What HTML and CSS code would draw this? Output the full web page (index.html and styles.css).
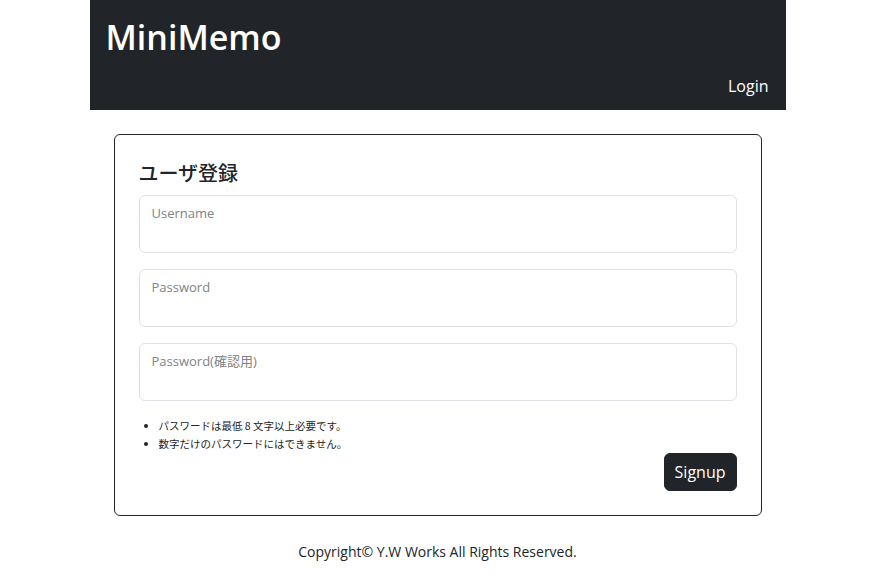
FILE: index.html
```html
<!DOCTYPE html>
<html lang="ja">
<head>
<meta charset="utf-8">
<title>MiniMemo</title>
<link rel="stylesheet" href="styles.css">
</head>
<body>
<div class="container">
  <header class="site-header">
    <h1 class="brand">MiniMemo</h1>
    <nav class="nav"><a class="nav-link" href="#">Login</a></nav>
  </header>
  <main class="card">
    <h4 class="card-title">ユーザ登録</h4>
    <form class="form">
      <div class="field">
        <input class="field-input" type="text" id="username">
        <label class="field-label" for="username">Username</label>
      </div>
      <div class="field">
        <input class="field-input" type="password" id="password">
        <label class="field-label" for="password">Password</label>
      </div>
      <div class="field">
        <input class="field-input" type="password" id="password2">
        <label class="field-label" for="password2">Password(確認用)</label>
      </div>
      <ul class="notes">
        <li>パスワードは最低 8 文字以上必要です。</li>
        <li>数字だけのパスワードにはできません。</li>
      </ul>
      <div class="actions">
        <button class="btn" type="button">Signup</button>
      </div>
    </form>
  </main>
  <footer class="footer">Copyright© Y.W Works All Rights Reserved.</footer>
</div>
</body>
</html>
```
FILE: styles.css
```css
* { box-sizing: border-box; }
html, body {
  margin: 0;
  padding: 0;
  background: #fff;
  color: #212529;
  font-family: "Open Sans", "Noto Sans CJK JP", sans-serif;
  font-size: 16px;
  line-height: 1.5;
}
.container {
  width: 696px;
  margin: 0 auto;
}
.site-header {
  background: #212529;
  color: #fff;
  padding: 16px 17px 12px 16px;
  display: flex;
  flex-direction: column;
}
.brand {
  margin: 0 0 16px;
  font-size: 34px;
  line-height: 42px;
  font-weight: 600;
}
.nav {
  display: flex;
  justify-content: flex-end;
}
.nav-link {
  color: #fff;
  text-decoration: none;
  line-height: 24px;
}
.card {
  margin: 24px;
  border: 1px solid #212529;
  border-radius: 6px;
  padding: 24px;
}
.card-title {
  margin: 0 0 8px;
  font-family: "Noto Sans CJK JP", sans-serif;
  font-size: 20px;
  line-height: 28px;
  font-weight: 500;
}
.form {
  display: flex;
  flex-direction: column;
}
.field {
  position: relative;
  margin-bottom: 16px;
}
.field-input {
  display: block;
  width: 100%;
  height: 58px;
  border: 1px solid #dee2e6;
  border-radius: 6px;
  padding: 26px 12px 8px;
  font: inherit;
  background: #fff;
}
.field-label {
  position: absolute;
  left: 13px;
  top: 8px;
  font-size: 13px;
  line-height: 20px;
  color: #808386;
}
.notes {
  margin: 0;
  padding-left: 20px;
  font-family: "Noto Sans CJK JP", sans-serif;
  font-size: 10.5px;
  line-height: 18px;
}
.actions {
  display: flex;
  justify-content: flex-end;
}
.btn {
  font: inherit;
  line-height: 24px;
  padding: 6px 10px;
  background: #212529;
  color: #fff;
  border: 1px solid #212529;
  border-radius: 6px;
}
.footer {
  text-align: center;
  font-size: 14px;
  line-height: 24px;
}
```
